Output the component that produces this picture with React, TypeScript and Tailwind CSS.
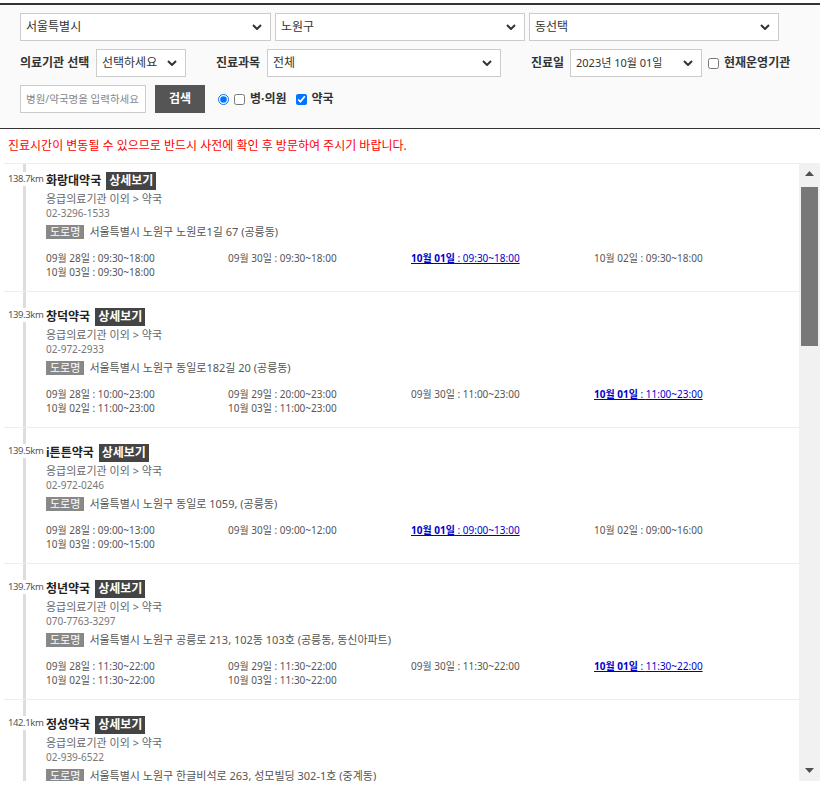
type Hour = { day: string; time: string; today?: boolean }
type Place = { km: string; name: string; tel: string; addr: string; hours: Hour[] }

const h = (day: string, time: string, today = false): Hour => ({ day, time, today })

const places: Place[] = [
  {
    km: '138.7km', name: '화랑대약국', tel: '02-3296-1533', addr: '서울특별시 노원구 노원로1길 67 (공릉동)',
    hours: [h('09월 28일', '09:30~18:00'), h('09월 30일', '09:30~18:00'), h('10월 01일', '09:30~18:00', true), h('10월 02일', '09:30~18:00'), h('10월 03일', '09:30~18:00')],
  },
  {
    km: '139.3km', name: '창덕약국', tel: '02-972-2933', addr: '서울특별시 노원구 동일로182길 20 (공릉동)',
    hours: [h('09월 28일', '10:00~23:00'), h('09월 29일', '20:00~23:00'), h('09월 30일', '11:00~23:00'), h('10월 01일', '11:00~23:00', true), h('10월 02일', '11:00~23:00'), h('10월 03일', '11:00~23:00')],
  },
  {
    km: '139.5km', name: 'i튼튼약국', tel: '02-972-0246', addr: '서울특별시 노원구 동일로 1059, (공릉동)',
    hours: [h('09월 28일', '09:00~13:00'), h('09월 30일', '09:00~12:00'), h('10월 01일', '09:00~13:00', true), h('10월 02일', '09:00~16:00'), h('10월 03일', '09:00~15:00')],
  },
  {
    km: '139.7km', name: '청년약국', tel: '070-7763-3297', addr: '서울특별시 노원구 공릉로 213, 102동 103호 (공릉동, 동신아파트)',
    hours: [h('09월 28일', '11:30~22:00'), h('09월 29일', '11:30~22:00'), h('09월 30일', '11:30~22:00'), h('10월 01일', '11:30~22:00', true), h('10월 02일', '11:30~22:00'), h('10월 03일', '11:30~22:00')],
  },
  {
    km: '142.1km', name: '정성약국', tel: '02-939-6522', addr: '서울특별시 노원구 한글비석로 263, 성모빌딩 302-1호 (중계동)',
    hours: [h('09월 28일', '09:00~21:00'), h('09월 30일', '09:00~18:00'), h('10월 01일', '10:00~18:00', true), h('10월 02일', '09:00~21:00'), h('10월 03일', '10:00~18:00')],
  },
]

function Chevron() {
  return (
    <svg width="10" height="6" viewBox="0 0 10 6" className="shrink-0">
      <path d="M1 1l4 4 4-4" fill="none" stroke="#333" strokeWidth="2" />
    </svg>
  )
}

function FakeSelect({ value, className }: { value: string; className: string }) {
  return (
    <div className={`flex h-[28px] items-center justify-between border border-[#ccc] bg-white pl-[5px] pr-[8px] text-[#333] ${className}`}>
      <span className="truncate">{value}</span>
      <Chevron />
    </div>
  )
}

function Row({ p }: { p: Place }) {
  return (
    <div className="grid grid-cols-[42px_1fr] border-b border-[#eee]">
      <div className="grid">
        <div className="col-start-1 row-start-1 ml-[19px] w-[3px] bg-[#ddd]" />
        <div className="col-start-1 row-start-1 mt-[16px] self-start justify-self-start bg-white pl-[4px] text-[9.5px] leading-[14px] tracking-[-0.4px] text-[#555]">
          {p.km}
        </div>
      </div>
      <div className="pt-[15px] pb-[12px]">
        <div className="flex h-[20px] items-center gap-[5px]">
          <span className="text-[12px] font-bold text-[#222]">{p.name}</span>
          <span className="flex h-[18px] items-center bg-[#444] px-[3px] text-[12px] font-bold text-white">상세보기</span>
        </div>
        <div className="h-[15px] text-[11px] leading-[15px] text-[#666]">응급의료기관 이외 &gt; 약국</div>
        <div className="h-[15px] text-[10px] leading-[15px] text-[#777]">{p.tel}</div>
        <div className="mt-[2px] flex h-[18px] items-center gap-[5px]">
          <span className="flex h-[14px] items-center bg-[#888] px-[4px] text-[11px] text-white">도로명</span>
          <span className="text-[11px] text-[#555]">{p.addr}</span>
        </div>
        <div className="mt-[10px] grid grid-cols-[182px_183px_183px_183px]">
          {p.hours.map((x) =>
            x.today ? (
              <div key={x.day} className="h-[14px] text-[10px] leading-[14px] text-[#0000cc] underline">
                <b>{x.day}</b> : {x.time}
              </div>
            ) : (
              <div key={x.day} className="h-[14px] text-[10px] leading-[14px] text-[#555]">
                {x.day} : {x.time}
              </div>
            ),
          )}
        </div>
      </div>
    </div>
  )
}

function ScrollBar() {
  return (
    <div className="flex w-[21px] shrink-0 flex-col bg-[#f1f1f1]">
      <div className="flex h-[21px] items-center justify-center">
        <svg width="9" height="5" viewBox="0 0 9 5">
          <path d="M0 5L4.5 0L9 5Z" fill="#505050" />
        </svg>
      </div>
      <div className="flex-1">
        <div className="mx-[2px] mt-[3px] h-[159px] bg-[#787878]" />
      </div>
      <div className="flex h-[21px] items-center justify-center">
        <svg width="9" height="5" viewBox="0 0 9 5">
          <path d="M0 0L4.5 5L9 0Z" fill="#505050" />
        </svg>
      </div>
    </div>
  )
}

export default function App() {
  return (
    <div className="min-h-[795px] bg-white pt-[3px] font-['Noto_Sans','Noto_Sans_CJK_KR',sans-serif] text-[#333]">
      <div className="w-[820px] border-t-2 border-b border-[#333] bg-[#fafafa] px-[20px] pt-[8px] pb-[15px]">
        <div className="flex gap-[4px] text-[12px]">
          <FakeSelect value="서울특별시" className="w-[251px]" />
          <FakeSelect value="노원구" className="w-[250px]" />
          <FakeSelect value="동선택" className="w-[250px]" />
        </div>
        <div className="mt-[8px] flex h-[28px] items-center text-[12px] font-bold">
          <span className="w-[76px]">의료기관 선택</span>
          <FakeSelect value="선택하세요" className="w-[90px] font-normal" />
          <span className="ml-[30px] w-[51px]">진료과목</span>
          <FakeSelect value="전체" className="w-[234px] font-normal" />
          <span className="ml-[30px] w-[39px]">진료일</span>
          <FakeSelect value="2023년 10월 01일" className="w-[132px] text-[11px] font-normal" />
          <input type="checkbox" className="ml-[6px] h-[11px] w-[11px]" />
          <span className="ml-[5px]">현재운영기관</span>
        </div>
        <div className="mt-[8px] flex h-[28px] items-center text-[12px] font-bold">
          <input
            placeholder="병원/약국명을 입력하세요"
            className="h-[28px] w-[126px] border border-[#ccc] bg-white px-[5px] text-[10.5px] font-normal placeholder:text-[#888]"
          />
          <button className="ml-[9px] h-[28px] w-[50px] bg-[#555] text-[12px] font-bold text-white">검색</button>
          <input type="radio" defaultChecked className="ml-[13px] h-[11px] w-[11px]" />
          <input type="checkbox" className="ml-[5px] h-[11px] w-[11px]" />
          <span className="ml-[5px]">병·의원</span>
          <input type="checkbox" defaultChecked className="ml-[9px] h-[11px] w-[11px]" />
          <span className="ml-[5px]">약국</span>
        </div>
      </div>

      <div className="flex h-[34px] items-center px-[8px] text-[12px] text-[#ff0000]">
        진료시간이 변동될 수 있으므로 반드시 사전에 확인 후 방문하여 주시기 바랍니다.
      </div>

      <div className="ml-[4px] flex h-[618px] w-[816px]">
        <div className="flex-1 overflow-hidden border-t border-[#eee]">
          <div className="-mt-[8px]">
            {places.map((p) => (
              <Row key={p.name} p={p} />
            ))}
          </div>
        </div>
        <ScrollBar />
      </div>
    </div>
  )
}
